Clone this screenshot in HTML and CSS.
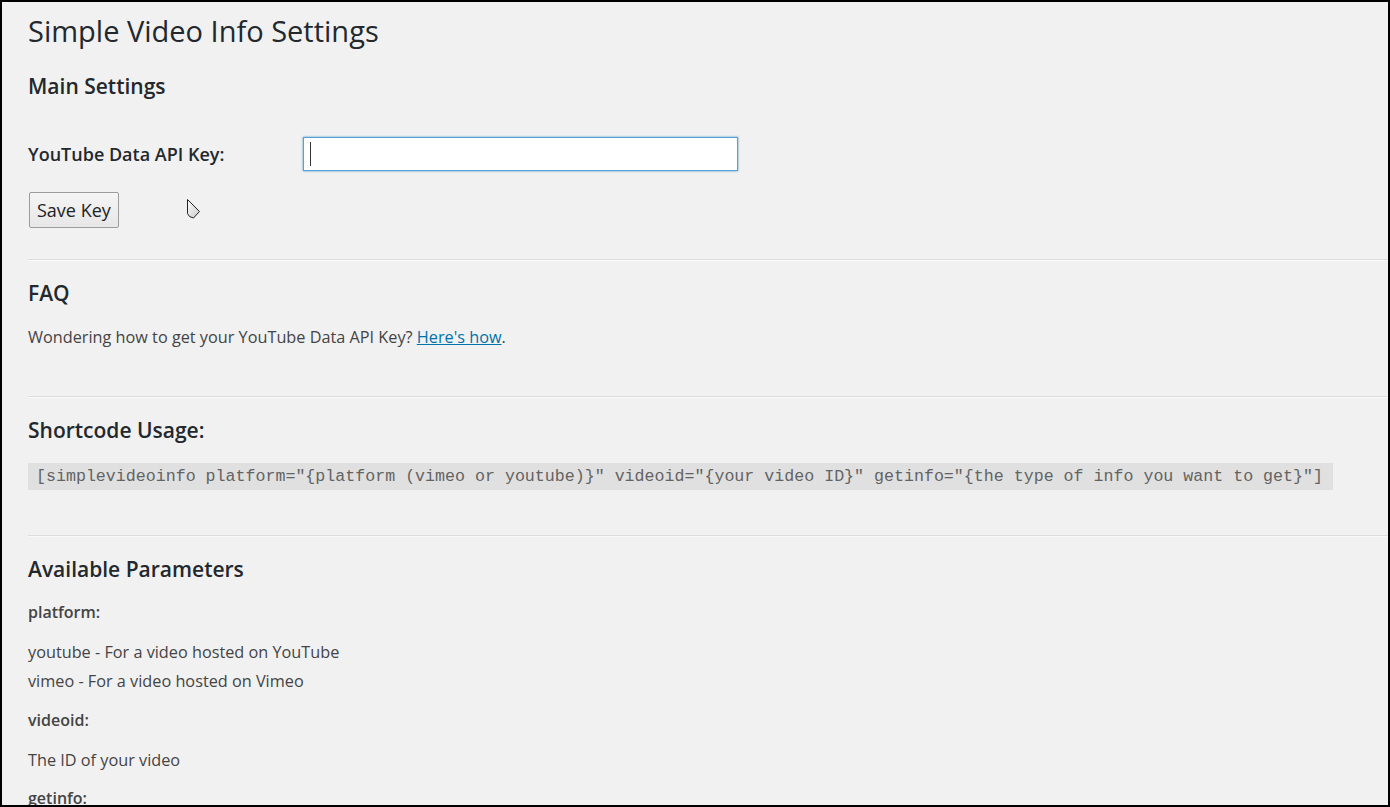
FILE: index.html
```html
<!DOCTYPE html>
<html lang="en">
<head>
<meta charset="utf-8">
<title>Simple Video Info Settings</title>
<link rel="stylesheet" href="styles.css">
</head>
<body>
<div class="frame">
  <div class="wrap">
    <h1 class="title">Simple Video Info Settings</h1>
    <h2 class="section section-first">Main Settings</h2>
    <form class="key-form">
      <div class="field-row">
        <label class="field-label" for="apikey">YouTube Data API Key:</label>
        <div class="input-wrap">
          <input id="apikey" class="text-input" type="text" value="">
          <span class="caret"></span>
        </div>
      </div>
      <div class="button-row">
        <button type="button" class="btn">Save Key</button>
        <svg class="cursor" width="16" height="22" viewBox="0 0 16 22" aria-hidden="true">
          <defs>
            <linearGradient id="cg" x1="0" y1="0" x2="1" y2="1">
              <stop offset="0" stop-color="#ffffff"/>
              <stop offset="1" stop-color="#c8c8c8"/>
            </linearGradient>
          </defs>
          <path d="M1.5 1.5 L1.5 15.5 L3.5 18.5 L7.5 20 L13.5 13.5 Z" fill="url(#cg)" stroke="#222" stroke-width="1" stroke-linejoin="round"/>
        </svg>
      </div>
    </form>
    <hr class="divider divider-1">
    <h2 class="section">FAQ</h2>
    <p class="text faq-text">Wondering how to get your YouTube Data API Key? <a href="#" class="link">Here's how</a>.</p>
    <hr class="divider divider-2">
    <h2 class="section">Shortcode Usage:</h2>
    <div class="code-row"><code class="code">[simplevideoinfo platform="{platform (vimeo or youtube)}" videoid="{your video ID}" getinfo="{the type of info you want to get}"]</code></div>
    <hr class="divider divider-3">
    <h2 class="section">Available Parameters</h2>
    <h3 class="param">platform:</h3>
    <p class="text list-text">youtube - For a video hosted on YouTube<br>vimeo - For a video hosted on Vimeo</p>
    <h3 class="param param-videoid">videoid:</h3>
    <p class="text id-text">The ID of your video</p>
    <h3 class="param param-getinfo">getinfo:</h3>
  </div>
</div>
</body>
</html>
```

FILE: styles.css
```css
html, body {
  margin: 0;
  padding: 0;
  background: #000;
}

.frame {
  box-sizing: border-box;
  width: 1390px;
  height: 807px;
  border: 2px solid #000;
  background: #f1f1f1;
  overflow: hidden;
  font-family: "Open Sans", "Noto Sans", sans-serif;
  color: #444;
}

.wrap {
  margin-left: 26px;
  display: flex;
  flex-direction: column;
  align-items: flex-start;
}

.title {
  margin: 9px 0 0;
  font-size: 29px;
  line-height: 40px;
  font-weight: 400;
  color: #23282d;
}

.section {
  margin: 17px 0 0;
  font-size: 21px;
  line-height: 30px;
  font-weight: 600;
  color: #23282d;
}

.section-first {
  margin-top: 20px;
}

.key-form {
  margin: 0;
  display: flex;
  flex-direction: column;
  align-items: flex-start;
}

.field-row {
  margin-top: 36px;
  display: flex;
  align-items: center;
}

.field-label {
  width: 275px;
  font-size: 18px;
  font-weight: 600;
  color: #23282d;
}

.input-wrap {
  position: relative;
}

.text-input {
  box-sizing: border-box;
  width: 435px;
  height: 34px;
  margin: 0;
  padding: 0 8px;
  border: 1px solid #5b9dd9;
  border-radius: 0;
  background: #fff;
  box-shadow: 0 0 2px rgba(30, 140, 190, 0.8);
  outline: none;
  font-family: "Open Sans", sans-serif;
  font-size: 16px;
}

.caret {
  position: absolute;
  left: 7px;
  top: 5px;
  width: 1px;
  height: 24px;
  background: #333;
}

.button-row {
  position: relative;
  margin-top: 21px;
  display: flex;
  align-items: center;
}

.btn {
  box-sizing: border-box;
  height: 36px;
  margin: 0 0 0 1px;
  padding: 0 7px;
  border: 1px solid #9c9c9c;
  border-radius: 2px;
  background: linear-gradient(#f5f5f5, #e7e7e7);
  font-family: "Open Sans", sans-serif;
  font-size: 18px;
  color: #222;
  cursor: default;
}

.cursor {
  position: absolute;
  left: 158px;
  top: 6px;
}

.divider {
  align-self: stretch;
  height: 0;
  margin: 31px 0 0;
  border: 0;
  border-top: 1px solid #dcdcdc;
  border-bottom: 1px solid #f9f9f9;
}

.divider-2 {
  margin-top: 47px;
}

.divider-3 {
  margin-top: 45px;
}

.text {
  margin: 16px 0 0;
  font-size: 16.25px;
  line-height: 24px;
  color: #444;
}

.faq-text {
  margin-top: 17px;
}

.link {
  color: #0073aa;
  text-decoration: underline;
}

.code-row {
  margin-top: 18px;
}

.code {
  display: inline-block;
  height: 27px;
  padding: 0 10px 0 8px;
  background: #e0e0e0;
  font-family: "Liberation Mono", "DejaVu Sans Mono", monospace;
  font-size: 16.64px;
  line-height: 27px;
  color: #636363;
}

.param {
  margin: 16px 0 0;
  font-size: 16px;
  line-height: 24px;
  font-weight: 600;
  color: #444;
}

.list-text {
  margin-top: 14px;
  line-height: 29px;
}

.param-videoid {
  margin-top: 12px;
}

.id-text {
  margin-top: 16px;
}

.param-getinfo {
  margin-top: 14px;
}
```
